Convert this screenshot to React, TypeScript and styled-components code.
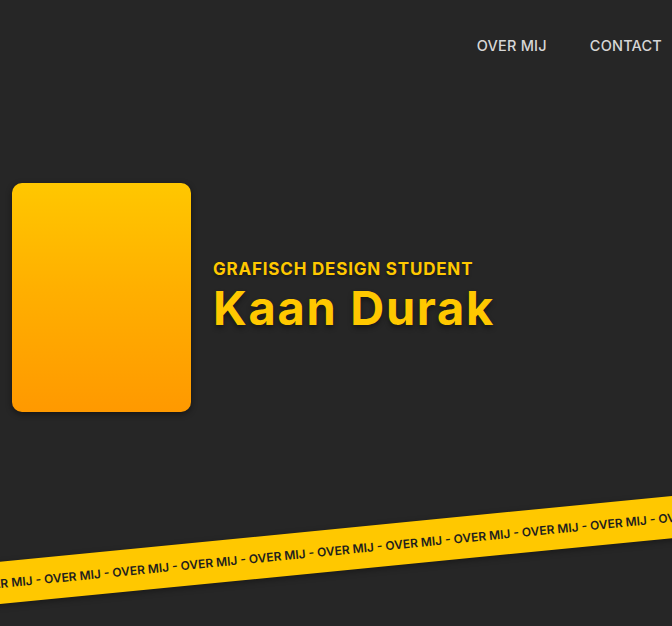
import React from 'react';
import styled, { createGlobalStyle } from 'styled-components';

const GlobalStyle = createGlobalStyle`
  html, body {
    margin: 0;
    padding: 0;
    background: #262626;
  }
  body {
    font-family: Inter, "Open Sans", sans-serif;
  }
`;

const Page = styled.div`
  width: 100%;
  height: 626px;
  overflow: hidden;
  background: #262626;
  display: flex;
  flex-direction: column;
`;

const Header = styled.header`
  height: 90px;
  display: flex;
  justify-content: flex-end;
  align-items: center;
  padding-right: 10px;
  gap: 43px;
`;

const NavLink = styled.a`
  color: #d6d6d6;
  font-size: 14.5px;
  font-weight: 500;
  letter-spacing: 0.2px;
  text-decoration: none;
`;

const Hero = styled.section`
  display: flex;
  align-items: center;
  gap: 22px;
  padding: 93px 0 0 12px;
`;

const Portrait = styled.div`
  width: 179px;
  height: 229px;
  border-radius: 10px;
  background: linear-gradient(180deg, #ffc700 0%, #ffb000 45%, #ff9900 100%);
  box-shadow: 0 2px 6px rgba(0, 0, 0, 0.45);
`;

const Intro = styled.div`
  display: flex;
  flex-direction: column;
  gap: 3px;
  margin-top: -3px;
`;

const Subtitle = styled.h2`
  margin: 0;
  color: #ffc800;
  font-size: 17px;
  line-height: 20px;
  font-weight: 700;
  letter-spacing: 0.8px;
  text-shadow: 0 2px 3px rgba(0, 0, 0, 0.35);
`;

const Name = styled.h1`
  margin: 0;
  color: #ffc800;
  font-size: 47px;
  line-height: 52px;
  font-weight: 700;
  letter-spacing: 1.7px;
  text-shadow: 0 3px 5px rgba(0, 0, 0, 0.4);
`;

const Banner = styled.div`
  margin-top: 117px;
  margin-left: -100px;
  width: 872px;
  height: 42px;
  flex-shrink: 0;
  background: #ffc800;
  transform: rotate(-5.6deg);
  box-shadow: 0 2px 6px rgba(0, 0, 0, 0.35);
  display: flex;
  align-items: center;
  overflow: hidden;
`;

const BannerText = styled.span`
  white-space: nowrap;
  color: #1e1e1e;
  font-size: 12px;
  font-weight: 600;
  margin-left: 74px;
`;

export default function App() {
  const marquee = Array.from({ length: 16 }, () => 'OVER MIJ').join(' - ');
  return (
    <>
      <GlobalStyle />
      <Page>
        <Header>
          <NavLink href="#over">OVER MIJ</NavLink>
          <NavLink href="#contact">CONTACT</NavLink>
        </Header>
        <Hero>
          <Portrait />
          <Intro>
            <Subtitle>GRAFISCH DESIGN STUDENT</Subtitle>
            <Name>Kaan Durak</Name>
          </Intro>
        </Hero>
        <Banner>
          <BannerText>{marquee}</BannerText>
        </Banner>
      </Page>
    </>
  );
}
